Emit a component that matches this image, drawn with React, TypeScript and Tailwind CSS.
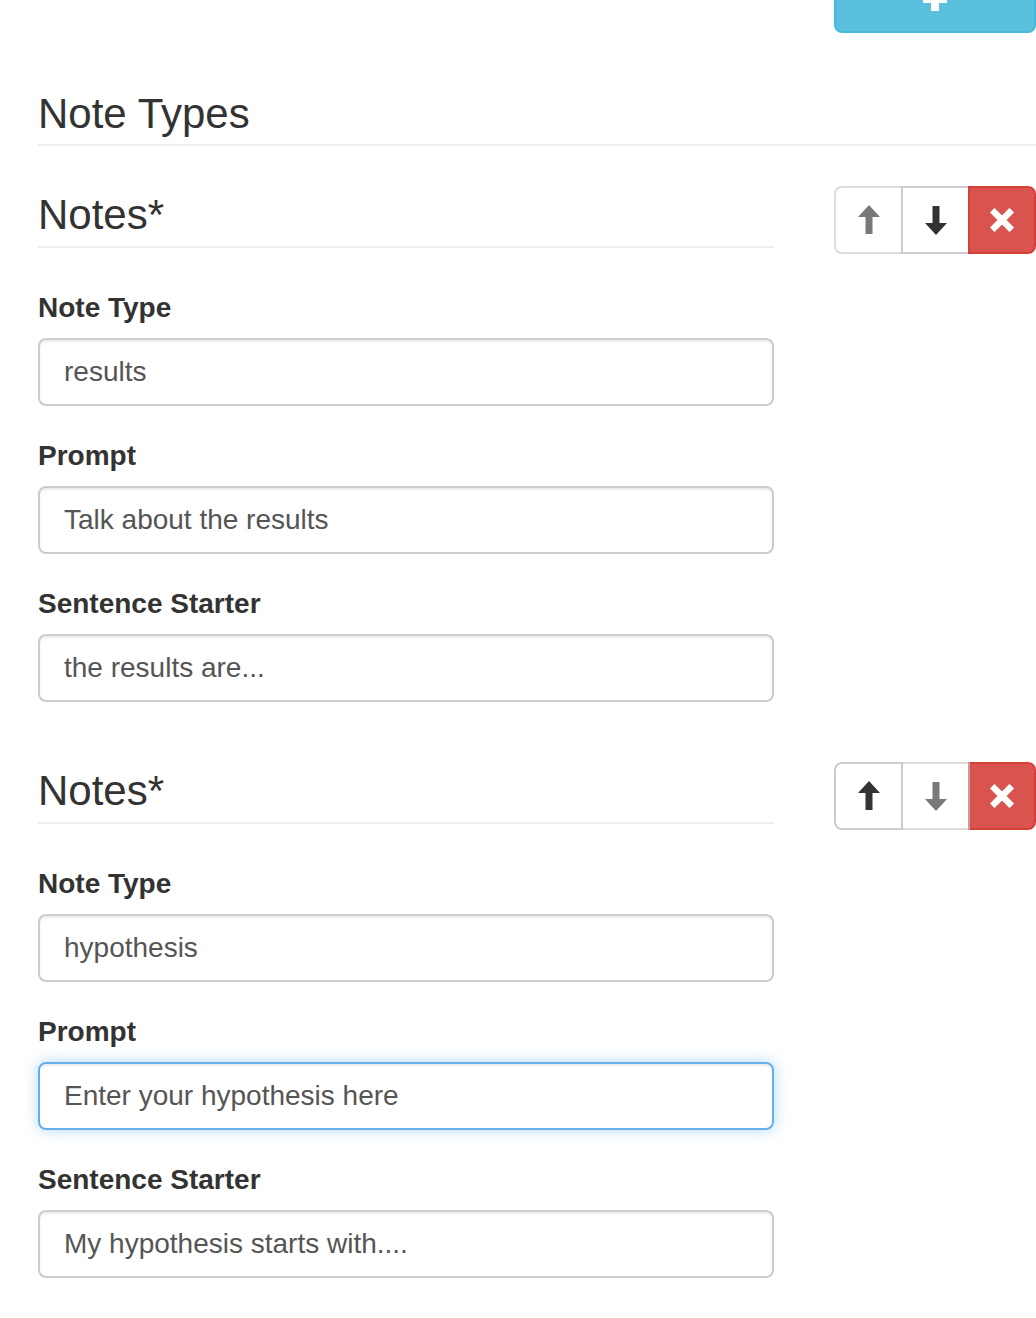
import React from 'react';

interface Field {
  label: string;
  value: string;
  focused?: boolean;
}

interface NoteSection {
  id: string;
  upDisabled: boolean;
  downDisabled: boolean;
  fields: Field[];
}

const SECTIONS: NoteSection[] = [
  {
    id: 'results',
    upDisabled: true,
    downDisabled: false,
    fields: [
      { label: 'Note Type', value: 'results' },
      { label: 'Prompt', value: 'Talk about the results' },
      { label: 'Sentence Starter', value: 'the results are...' },
    ],
  },
  {
    id: 'hypothesis',
    upDisabled: false,
    downDisabled: true,
    fields: [
      { label: 'Note Type', value: 'hypothesis' },
      { label: 'Prompt', value: 'Enter your hypothesis here', focused: true },
      { label: 'Sentence Starter', value: 'My hypothesis starts with....' },
    ],
  },
];

function ArrowIcon({ dir }: { dir: 'up' | 'down' }) {
  return (
    <svg width="22" height="30" viewBox="0 0 22 30" className={dir === 'down' ? 'rotate-180' : ''}>
      <polygon points="11,0 22,12 14.5,12 14.5,29 7.5,29 7.5,12 0,12" fill="currentColor" />
    </svg>
  );
}

function RemoveIcon() {
  return (
    <svg width="24" height="24" viewBox="0 0 24 24">
      <path d="M4.5 4.5 L19.5 19.5 M19.5 4.5 L4.5 19.5" stroke="#fff" strokeWidth="6.5" strokeLinecap="square" fill="none" />
    </svg>
  );
}

function PlusIcon() {
  return (
    <svg width="26" height="26" viewBox="0 0 26 26">
      <path d="M13 1 V25 M1 13 H25" stroke="#fff" strokeWidth="8" fill="none" />
    </svg>
  );
}

function ButtonGroup({ upDisabled, downDisabled }: { upDisabled: boolean; downDisabled: boolean }) {
  return (
    <div className="flex h-[68px] w-[202px]">
      <button
        className={`flex h-full w-[69px] items-center justify-center rounded-l-lg border-2 border-[#ccc] bg-white text-[#333] ${upDisabled ? 'opacity-[0.65]' : ''}`}
      >
        <ArrowIcon dir="up" />
      </button>
      <button
        className={`-ml-[2px] flex h-full w-[69px] items-center justify-center border-2 border-[#ccc] bg-white text-[#333] ${downDisabled ? 'opacity-[0.65]' : ''}`}
      >
        <ArrowIcon dir="down" />
      </button>
      <button className="-ml-[2px] flex h-full w-[68px] items-center justify-center rounded-r-lg border-2 border-[#d43f3a] bg-[#d9534f]">
        <RemoveIcon />
      </button>
    </div>
  );
}

function FormGroup({ field }: { field: Field }) {
  return (
    <div className="mb-[35px]">
      <label className="mb-[15px] block text-[28px] font-bold leading-[30px] text-[#333]">{field.label}</label>
      <input
        readOnly
        value={field.value}
        className={`block h-[68px] w-full rounded-lg border-2 bg-white px-[24px] text-[28px] text-[#555] outline-none ${
          field.focused
            ? 'border-[#66afe9] shadow-[inset_0_2px_2px_rgba(0,0,0,0.075),0_0_14px_rgba(102,175,233,0.5)]'
            : 'border-[#ccc] shadow-[inset_0_2px_2px_rgba(0,0,0,0.075)]'
        }`}
      />
    </div>
  );
}

export default function App() {
  return (
    <div className="h-[1318px] w-full overflow-hidden bg-white pl-[38px] font-['Liberation_Sans',Helvetica,Arial,sans-serif] text-[#333]">
      {/* Add button, mostly scrolled off the top */}
      <div className="flex h-[33px] justify-end">
        <button className="-mt-[35px] flex h-[68px] w-[202px] items-center justify-center rounded-lg border-2 border-[#46b8da] bg-[#5bc0de]">
          <PlusIcon />
        </button>
      </div>

      <h3 className="mt-[58px] border-b-2 border-[#eee] pb-[7px] text-[42px] font-normal leading-[46px]">Note Types</h3>

      <div className="mt-[40px] flex flex-col gap-[25px]">
        {SECTIONS.map((section) => (
          <div key={section.id} className="flex items-start gap-[60px]">
            <div className="w-[736px]">
              <h3 className="border-b-2 border-[#eee] pb-2 pt-[6px] text-[42px] font-normal leading-[46px]">Notes*</h3>
              <div className="mt-[45px]">
                {section.fields.map((field) => (
                  <FormGroup key={field.label} field={field} />
                ))}
              </div>
            </div>
            <ButtonGroup upDisabled={section.upDisabled} downDisabled={section.downDisabled} />
          </div>
        ))}
      </div>
    </div>
  );
}
